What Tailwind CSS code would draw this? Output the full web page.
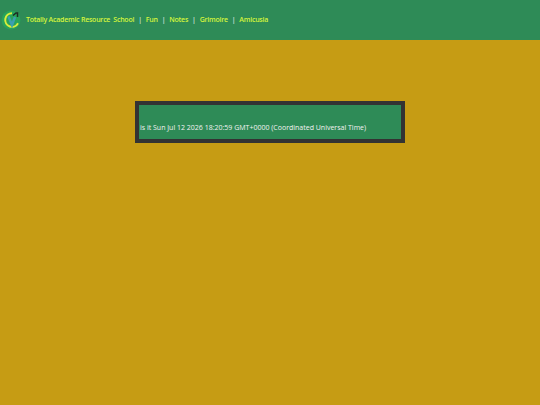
<!doctype html>
<html lang="en">
  <head>
    <meta charset="UTF-8" />
    <title>Totally Academic Resource School</title>
    <script src="https://cdn.jsdelivr.net/npm/@tailwindcss/browser@4"></script>
  </head>
  <body class="min-h-[405px] bg-[#c69c14] font-['Open_Sans',sans-serif] overflow-hidden">
    <header class="flex h-10 items-center bg-[#2e8b57] pl-[1px] text-[7px] font-semibold tracking-[-0.24px] text-[#d4f53c]">
      <svg width="20" height="20" viewBox="0 0 20 20" class="shrink-0">
        <circle cx="10" cy="10" r="9.5" fill="#27a35a" />
        <path d="M11 3.2a6.8 6.8 0 1 0 6 10" fill="none" stroke="#d8ee3c" stroke-width="2" />
        <path d="M7.5 6.5l3.5 8.5 3-8" fill="none" stroke="#3b9fb0" stroke-width="2.5" />
        <path d="M12 5.5l3-2.5h1.5v4" fill="none" stroke="#1c2a22" stroke-width="1.5" />
      </svg>
      <nav class="ml-[5px] flex items-center">
        <a href="#" class="whitespace-pre">Totally Academic Resource  School</a>
        <span class="mx-[4px] font-normal text-white">|</span>
        <a href="#">Fun</a>
        <span class="mx-[4px] font-normal text-white">|</span>
        <a href="#">Notes</a>
        <span class="mx-[4px] font-normal text-white">|</span>
        <a href="#">Grimoire</a>
        <span class="mx-[4px] font-normal text-white">|</span>
        <a href="#">Amicusia</a>
      </nav>
    </header>
    <main class="pt-[61px]">
      <div class="mx-auto flex h-[42px] w-[270px] items-center border-4 border-[#333333] bg-[#2e8b57] pl-px">
        <p class="whitespace-nowrap pt-[12px] text-[7px] text-[#f2f2f2]">is it Sun Jul 12 2026 18:20:59 GMT+0000 (Coordinated Universal Time)</p>
      </div>
    </main>
  </body>
</html>
